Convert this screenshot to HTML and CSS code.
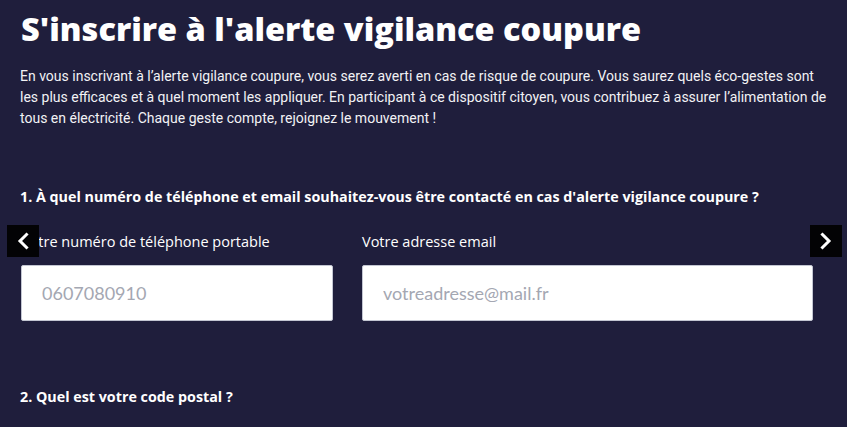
FILE: index.html
```html
<!DOCTYPE html>
<html lang="fr">
<head>
    <meta charset="UTF-8">
    <title>S'inscrire à l'alerte vigilance coupure</title>
    <link rel="stylesheet" href="styles.css">
</head>
<body>
    <div class="page">
        <h1>S'inscrire à l'alerte vigilance coupure</h1>
        <p class="intro">
            En vous inscrivant à l’alerte vigilance coupure, vous serez averti en cas de risque de coupure. Vous saurez quels éco-gestes sont
            les plus efficaces et à quel moment les appliquer. En participant à ce dispositif citoyen, vous contribuez à assurer l’alimentation de
            tous en électricité. Chaque geste compte, rejoignez le mouvement !
        </p>

        <div class="step">
            <h3>1. À quel numéro de téléphone et email souhaitez-vous être contacté en cas d'alerte vigilance coupure ?</h3>
            <div class="fields">
                <div class="field">
                    <label for="phone">Votre numéro de téléphone portable</label>
                    <input type="tel" id="phone" placeholder="0607080910" />
                </div>
                <div class="field">
                    <label for="email">Votre adresse email</label>
                    <input type="email" id="email" placeholder="votreadresse@mail.fr" />
                </div>
            </div>
        </div>

        <div class="step step-2">
            <h3>2. Quel est votre code postal ?</h3>
        </div>

        <!-- slider arrows -->
        <button class="arrow arrow-prev" aria-label="Précédent">
            <svg width="16" height="18" viewBox="0 0 16 18"><path d="M11.5 2.5 L5 9 L11.5 15.5" fill="none" stroke="#fff" stroke-width="3" stroke-linecap="square"/></svg>
        </button>
        <button class="arrow arrow-next" aria-label="Suivant">
            <svg width="16" height="18" viewBox="0 0 16 18"><path d="M4.5 2.5 L11 9 L4.5 15.5" fill="none" stroke="#fff" stroke-width="3" stroke-linecap="square"/></svg>
        </button>
    </div>
</body>
</html>
```

FILE: styles.css
```css
body {
    margin: 0;
    background-color: #1f1e3c;
    color: #fff;
    font-family: "Open Sans", "Noto Sans", sans-serif;
}
.page {
    padding: 0 18px 0 20px;
    height: 427px;
    overflow: hidden;
}
h1 {
    margin: 9px 0 0 1px;
    font-size: 32.5px;
    line-height: 40px;
    font-weight: 800;
}
.intro {
    margin: 17px 0 0;
    font-family: Roboto, sans-serif;
    font-size: 14px;
    line-height: 21px;
    color: #f2f2f5;
}
.step h3 {
    margin: 57px 0 0;
    font-size: 14.3px;
    line-height: 22px;
    font-weight: 700;
}
.fields {
    display: grid;
    grid-template-columns: 312px 451px;
    gap: 29px;
    margin-top: 23px;
    padding-left: 1px;
}
.field label {
    display: block;
    font-size: 14.5px;
    line-height: 22px;
}
.field input {
    display: block;
    box-sizing: border-box;
    width: 100%;
    height: 56px;
    margin-top: 12px;
    padding: 0 20px;
    border: 1px solid #c3c6d2;
    border-radius: 2px;
    background: #fff;
    font-family: Lato, sans-serif;
    font-size: 18px;
    color: #333;
}
.field input::placeholder {
    color: #a4a7b2;
}
.step-2 h3 {
    margin-top: 65px;
}
.arrow {
    position: absolute;
    top: 225px;
    width: 32px;
    height: 32px;
    padding: 0;
    border: none;
    background: #030305;
    display: flex;
    align-items: center;
    justify-content: center;
    cursor: pointer;
}
.arrow-prev {
    left: 7px;
}
.arrow-next {
    left: 810px;
}
```
